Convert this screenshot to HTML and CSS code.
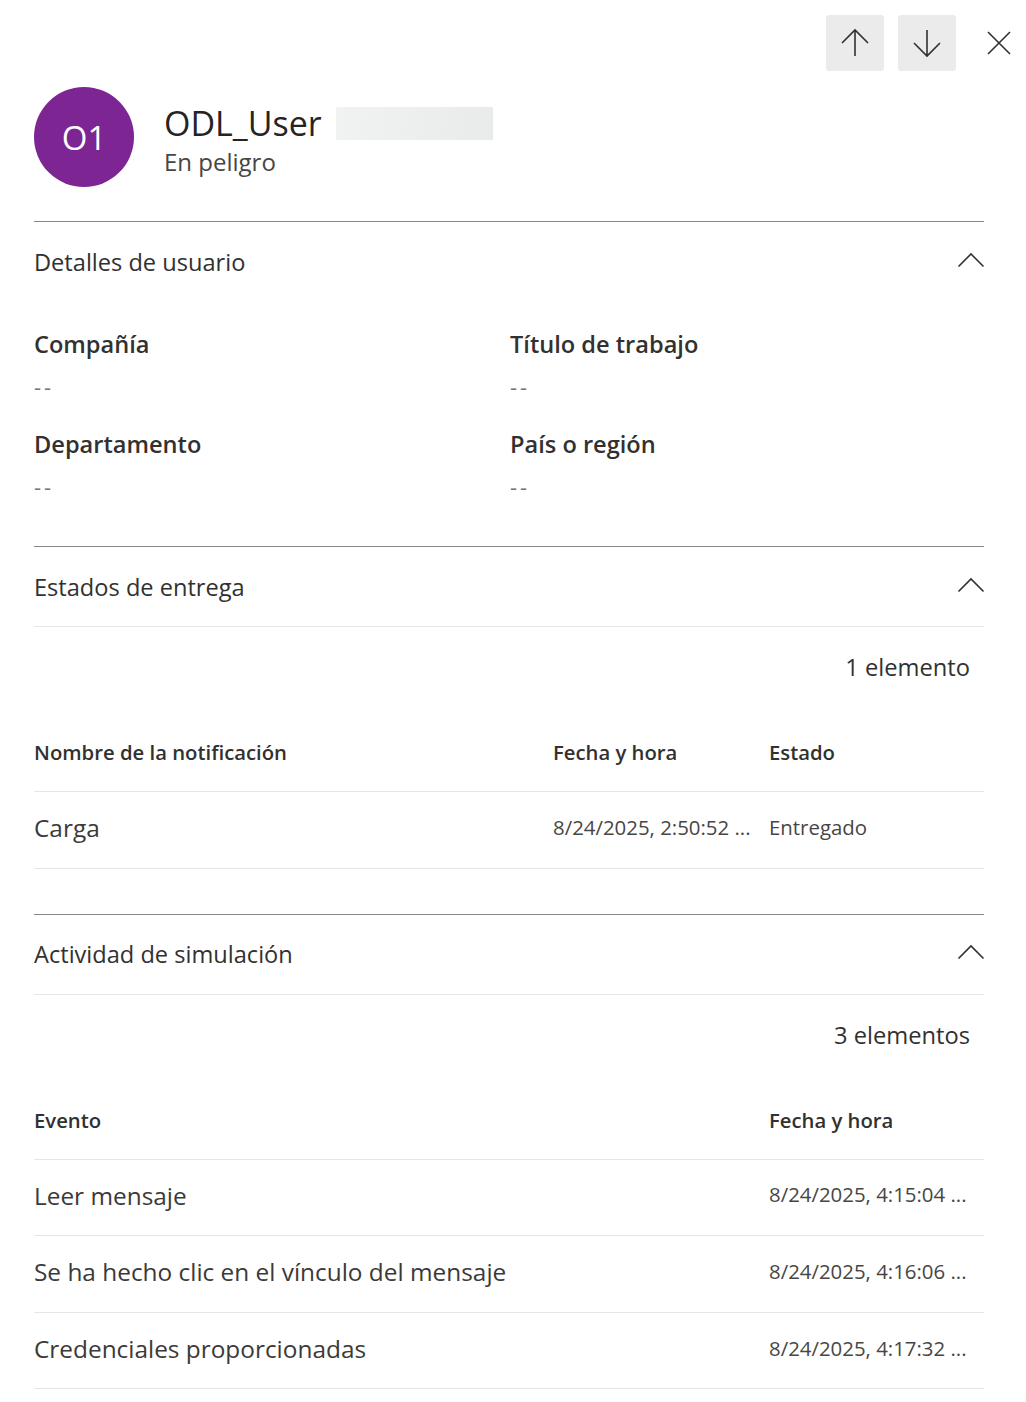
FILE: index.html
```html
<!DOCTYPE html>
<html lang="es">
<head>
<meta charset="utf-8">
<title>ODL_User</title>
<link rel="stylesheet" href="styles.css">
</head>
<body>
<div class="panel">
  <div class="topbar">
    <button class="nav-btn" aria-label="Anterior">
      <svg width="30" height="30" viewBox="0 0 30 30"><path d="M15 28V2M2 15L15 2L28 15" fill="none" stroke="#323130" stroke-width="1.6"/></svg>
    </button>
    <button class="nav-btn" aria-label="Siguiente">
      <svg width="30" height="30" viewBox="0 0 30 30"><path d="M15 2V28M2 15L15 28L28 15" fill="none" stroke="#323130" stroke-width="1.6"/></svg>
    </button>
    <button class="close-btn" aria-label="Cerrar">
      <svg width="24" height="24" viewBox="0 0 24 24"><path d="M1 1L23 23M23 1L1 23" fill="none" stroke="#323130" stroke-width="1.6"/></svg>
    </button>
  </div>

  <div class="content">
    <div class="header">
      <div class="avatar">O1</div>
      <div class="identity">
        <div class="name-line"><span class="name">ODL_User</span><span class="redacted"></span></div>
        <div class="status">En peligro</div>
      </div>
    </div>

    <section class="section">
      <div class="section-head">
        <span class="section-title">Detalles de usuario</span>
        <svg class="chev" width="28" height="16" viewBox="0 0 28 16"><path d="M1.5 14.5L14 2L26.5 14.5" fill="none" stroke="#323130" stroke-width="1.6"/></svg>
      </div>
      <div class="fields">
        <div class="field"><div class="field-label">Compañía</div><div class="field-value">--</div></div>
        <div class="field"><div class="field-label">Título de trabajo</div><div class="field-value">--</div></div>
        <div class="field"><div class="field-label">Departamento</div><div class="field-value">--</div></div>
        <div class="field"><div class="field-label">País o región</div><div class="field-value">--</div></div>
      </div>
    </section>

    <section class="section">
      <div class="section-head bordered">
        <span class="section-title">Estados de entrega</span>
        <svg class="chev" width="28" height="16" viewBox="0 0 28 16"><path d="M1.5 14.5L14 2L26.5 14.5" fill="none" stroke="#323130" stroke-width="1.6"/></svg>
      </div>
      <div class="count">1 elemento</div>
      <div class="table delivery">
        <div class="row head"><span>Nombre de la notificación</span><span>Fecha y hora</span><span>Estado</span></div>
        <div class="row"><span class="primary">Carga</span><span class="date">8/24/2025, 2:50:52 ...</span><span class="date">Entregado</span></div>
      </div>
    </section>

    <section class="section last">
      <div class="section-head bordered">
        <span class="section-title">Actividad de simulación</span>
        <svg class="chev" width="28" height="16" viewBox="0 0 28 16"><path d="M1.5 14.5L14 2L26.5 14.5" fill="none" stroke="#323130" stroke-width="1.6"/></svg>
      </div>
      <div class="count">3 elementos</div>
      <div class="table activity">
        <div class="row head"><span>Evento</span><span>Fecha y hora</span></div>
        <div class="row"><span class="primary">Leer mensaje</span><span class="date">8/24/2025, 4:15:04 ...</span></div>
        <div class="row"><span class="primary">Se ha hecho clic en el vínculo del mensaje</span><span class="date">8/24/2025, 4:16:06 ...</span></div>
        <div class="row"><span class="primary">Credenciales proporcionadas</span><span class="date">8/24/2025, 4:17:32 ...</span></div>
      </div>
    </section>
  </div>
</div>
</body>
</html>
```
FILE: styles.css
```css
* { box-sizing: border-box; }
html, body { margin: 0; padding: 0; background: #ffffff; }
body {
  font-family: "Open Sans", "Noto Sans", "Liberation Sans", sans-serif;
  color: #323130;
}
.panel { width: 1026px; }

.topbar {
  display: flex;
  justify-content: flex-end;
  align-items: center;
  padding: 15px 7px 0 0;
  height: 71px;
}
.nav-btn {
  width: 58px;
  height: 56px;
  background: #ebebeb;
  border: none;
  border-radius: 3px;
  display: flex;
  align-items: center;
  justify-content: center;
  padding: 0;
  margin-left: 14px;
}
.close-btn {
  width: 40px;
  height: 56px;
  background: none;
  border: none;
  display: flex;
  align-items: center;
  justify-content: center;
  padding: 0;
  margin-left: 23px;
}

.content { padding: 0 42px 0 34px; }

.header {
  display: flex;
  align-items: center;
  margin-top: 16px;
  height: 100px;
  margin-bottom: 34px;
}
.avatar {
  width: 100px;
  height: 100px;
  border-radius: 50%;
  background: #7c2593;
  color: #fff;
  font-size: 33px;
  display: flex;
  align-items: center;
  justify-content: center;
  flex-shrink: 0;
}
.identity { margin-left: 30px; padding-top: 6px; }
.name-line { display: flex; align-items: center; height: 42px; }
.name { font-size: 34px; color: #252423; line-height: 42px; }
.redacted {
  display: inline-block;
  width: 157px;
  height: 33px;
  margin-left: 14px;
  background: linear-gradient(100deg, #f1f2f2, #e9eaea);
}
.status { font-size: 24px; color: #484644; line-height: 32px; margin-top: 2px; }

.section { border-top: 1px solid #8a8886; }
.section-head {
  height: 80px;
  display: flex;
  align-items: center;
  justify-content: space-between;
}
.section-head.bordered { border-bottom: 1px solid #e6e6e6; }
.section-title { font-size: 23.6px; color: #323130; }
.chev { margin-right: -1px; margin-top: -4px; }

.fields {
  display: grid;
  grid-template-columns: 476px 1fr;
  row-gap: 26px;
  padding: 26px 0 44px;
}
.field-label { font-size: 23.6px; font-weight: 600; line-height: 32px; color: #323130; }
.field-value { font-size: 22px; line-height: 32px; margin-top: 10px; color: #797775; letter-spacing: 3px; }

.count {
  height: 88px;
  display: flex;
  align-items: center;
  justify-content: flex-end;
  padding: 0 14px 8px 0;
  font-size: 23.7px;
  color: #323130;
}
.row {
  display: grid;
  align-items: center;
  height: 76.6px;
  border-bottom: 1px solid #e6e6e6;
}
.row.head { height: 77px; }
.delivery .row { grid-template-columns: 519px 216px 1fr; }
.activity .row { grid-template-columns: 735px 1fr; }
.row.head span { font-size: 20.3px; font-weight: 600; color: #323130; padding-bottom: 2px; }
.row .primary { font-size: 24.4px; color: #3b3a39; padding-bottom: 4px; }
.row .date { font-size: 20.4px; color: #484644; white-space: nowrap; padding-bottom: 6px; }
.delivery { margin-bottom: 45px; }
```
